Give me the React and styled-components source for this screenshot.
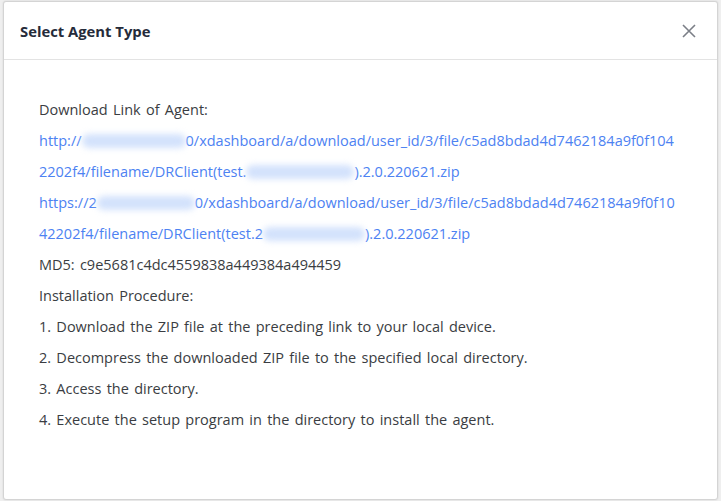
import React from "react";
import styled, { createGlobalStyle } from "styled-components";

const GlobalStyle = createGlobalStyle`
  html, body {
    margin: 0;
    padding: 0;
    background: #efefef;
  }
  body {
    font-family: "Open Sans", "Noto Sans", sans-serif;
  }
`;

const Page = styled.div`
  width: 721px;
  height: 501px;
  padding: 1px 3px 1px 3px;
  box-sizing: border-box;
`;

const Dialog = styled.div`
  height: 100%;
  box-sizing: border-box;
  background: #fff;
  border: 1px solid #d4d4d4;
  border-radius: 3px;
  box-shadow: 0 0 2px rgba(0, 0, 0, 0.12);
  display: flex;
  flex-direction: column;
`;

const Header = styled.div`
  height: 57px;
  flex: none;
  display: flex;
  align-items: center;
  justify-content: space-between;
  padding: 0 20px 0 16px;
  border-bottom: 1px solid #e3e3e3;
`;

const Title = styled.h2`
  margin: 0;
  font-size: 14.8px;
  font-weight: 700;
  color: #252b3a;
`;

const Close = styled.button`
  border: none;
  background: none;
  padding: 0;
  width: 16px;
  height: 16px;
  display: flex;
  cursor: pointer;
`;

const Body = styled.div`
  padding: 34px 35px 0 35px;
  display: flex;
  flex-direction: column;
`;

const Line = styled.div`
  font-size: 14.5px;
  line-height: 31px;
  word-spacing: 1.5px;
  color: ${(p) => (p.$link ? "#4d82f2" : "#3a3d42")};
  white-space: nowrap;
`;

const Hidden = styled.span`
  display: inline-block;
  width: ${(p) => p.$w}px;
  height: 14px;
  vertical-align: -2px;
  background: #d3e2fc;
  border-radius: 7px;
  filter: blur(3px);
`;

const CloseIcon = () => (
  <svg width="16" height="16" viewBox="0 0 16 16">
    <path d="M2 2 L14 14 M14 2 L2 14" stroke="#7b7f87" strokeWidth="1.6" fill="none" />
  </svg>
);

export default function App() {
  return (
    <>
      <GlobalStyle />
      <Page>
        <Dialog>
          <Header>
            <Title>Select Agent Type</Title>
            <Close aria-label="close">
              <CloseIcon />
            </Close>
          </Header>
          <Body>
            <Line>Download Link of Agent:</Line>
            <Line $link>
              http://<Hidden $w={104} />0/xdashboard/a/download/user_id/3/file/c5ad8bdad4d7462184a9f0f104
            </Line>
            <Line $link>
              2202f4/filename/DRClient(test.<Hidden $w={108} />).2.0.220621.zip
            </Line>
            <Line $link>
              https://2<Hidden $w={98} />0/xdashboard/a/download/user_id/3/file/c5ad8bdad4d7462184a9f0f10
            </Line>
            <Line $link>
              42202f4/filename/DRClient(test.2<Hidden $w={102} />).2.0.220621.zip
            </Line>
            <Line>MD5: c9e5681c4dc4559838a449384a494459</Line>
            <Line>Installation Procedure:</Line>
            <Line>1. Download the ZIP file at the preceding link to your local device.</Line>
            <Line>2. Decompress the downloaded ZIP file to the specified local directory.</Line>
            <Line>3. Access the directory.</Line>
            <Line>4. Execute the setup program in the directory to install the agent.</Line>
          </Body>
        </Dialog>
      </Page>
    </>
  );
}
